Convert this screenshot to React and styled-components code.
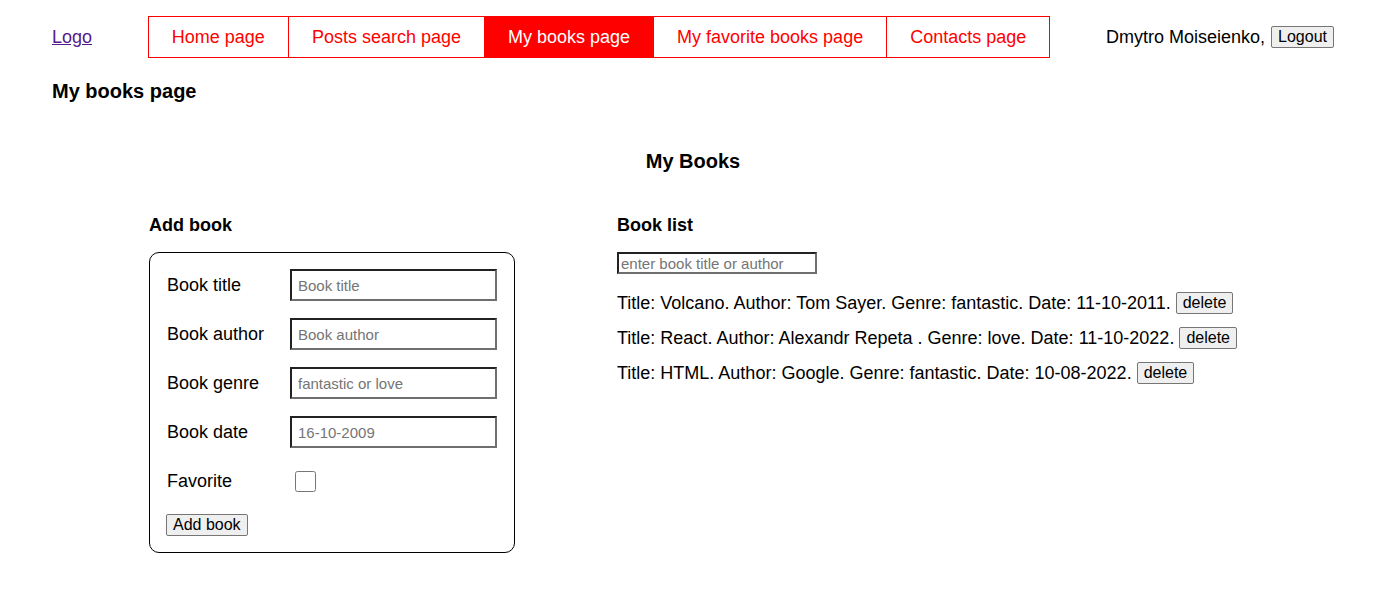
import styled, { createGlobalStyle } from 'styled-components';

const GlobalStyle = createGlobalStyle`
  body {
    margin: 0;
    font-family: "Liberation Sans", Arial, sans-serif;
    color: #000;
    background: #fff;
  }
`;

const navLinks = [
  { id: 1, label: 'Home page' },
  { id: 2, label: 'Posts search page' },
  { id: 3, label: 'My books page', active: true },
  { id: 4, label: 'My favorite books page' },
  { id: 5, label: 'Contacts page' },
];

const books = [
  { id: 1, title: 'Volcano', author: 'Tom Sayer', genre: 'fantastic', date: '11-10-2011' },
  { id: 2, title: 'React', author: 'Alexandr Repeta ', genre: 'love', date: '11-10-2022' },
  { id: 3, title: 'HTML', author: 'Google', genre: 'fantastic', date: '10-08-2022' },
];

const fields = [
  { id: 'title', label: 'Book title', placeholder: 'Book title' },
  { id: 'author', label: 'Book author', placeholder: 'Book author' },
  { id: 'genre', label: 'Book genre', placeholder: 'fantastic or love' },
  { id: 'date', label: 'Book date', placeholder: '16-10-2009' },
];

const Page = styled.div`
  padding: 16px 50px 40px 52px;
`;

const Header = styled.header`
  display: flex;
  align-items: center;
  justify-content: space-between;
  font-size: 18px;
`;

const Logo = styled.a`
  color: #551a8b;
  text-decoration: underline;
  font-size: 18px;
`;

const Nav = styled.nav`
  display: flex;
`;

const NavItem = styled.a`
  display: flex;
  align-items: center;
  height: 42px;
  box-sizing: border-box;
  padding: 0 23px;
  border: 1px solid #ff0000;
  margin-left: -1px;
  font-size: 18px;
  text-decoration: none;
  color: ${({ $active }) => ($active ? '#fff' : '#ff0000')};
  background: ${({ $active }) => ($active ? '#ff0000' : '#fff')};

  &:first-child {
    margin-left: 0;
  }
`;

const User = styled.div`
  display: flex;
  align-items: center;
  gap: 6px;
`;

const Button = styled.button`
  font-family: "Liberation Sans", Arial, sans-serif;
  font-size: 16px;
  line-height: 18px;
  padding: 1px 6px;
  border: 1px solid #767676;
  border-radius: 2px;
  background: #efefef;
  color: #000;
`;

const PageTitle = styled.h2`
  font-size: 20px;
  line-height: 23px;
  margin: 22px 0 0;
`;

const SectionTitle = styled.h2`
  font-size: 20px;
  line-height: 23px;
  text-align: center;
  margin: 47px 0 0;
`;

const Columns = styled.div`
  display: grid;
  grid-template-columns: 366px 1fr;
  column-gap: 102px;
  width: 1086px;
  margin: 42px auto 0;
  position: relative;
  left: -1px;
`;

const ColumnTitle = styled.h3`
  font-size: 18px;
  line-height: 21px;
  margin: 0 0 16px;
`;

const Form = styled.form`
  display: flex;
  flex-direction: column;
  align-items: flex-start;
  gap: 17px;
  border: 1px solid #000;
  border-radius: 10px;
  padding: 16px 17px 16px 16px;
`;

const Row = styled.label`
  display: flex;
  align-items: center;
  width: 100%;
  height: 32px;
  font-size: 18px;
`;

const LabelText = styled.span`
  width: 124px;
  flex-shrink: 0;
  padding-left: 1px;
  box-sizing: border-box;
`;

const TextInput = styled.input`
  width: 207px;
  min-width: 0;
  height: 32px;
  box-sizing: border-box;
  padding: 0 6px;
  font-family: "Liberation Sans", Arial, sans-serif;
  font-size: 15px;
  border: 2px solid;
  border-color: #222 #6f6f6f #6f6f6f #222;
  outline: none;

  &::placeholder {
    color: #757575;
  }
`;

const Checkbox = styled.input`
  width: 21px;
  height: 21px;
  margin: 0 0 0 5px;
`;

const SearchInput = styled.input`
  width: 200px;
  height: 22px;
  box-sizing: border-box;
  padding: 0 2px;
  font-family: "Liberation Sans", Arial, sans-serif;
  font-size: 15px;
  border: 2px solid;
  border-color: #222 #6f6f6f #6f6f6f #222;
  outline: none;

  &::placeholder {
    color: #757575;
  }
`;

const List = styled.ul`
  list-style: none;
  padding: 0;
  margin: 18px 0 0;
  display: flex;
  flex-direction: column;
  gap: 13px;
`;

const ListItem = styled.li`
  display: flex;
  align-items: center;
  gap: 5px;
  height: 22px;
  font-size: 18px;
  white-space: nowrap;
`;

export default function App() {
  return (
    <>
      <GlobalStyle />
      <Page>
        <Header>
          <Logo href="#">Logo</Logo>
          <Nav>
            {navLinks.map(({ id, label, active }) => (
              <NavItem key={id} href="#" $active={active}>
                {label}
              </NavItem>
            ))}
          </Nav>
          <User>
            <span>Dmytro Moiseienko,</span>
            <Button type="button">Logout</Button>
          </User>
        </Header>

        <PageTitle>My books page</PageTitle>
        <SectionTitle>My Books</SectionTitle>

        <Columns>
          <div>
            <ColumnTitle>Add book</ColumnTitle>
            <Form onSubmit={(e) => e.preventDefault()}>
              {fields.map(({ id, label, placeholder }) => (
                <Row key={id}>
                  <LabelText>{label}</LabelText>
                  <TextInput type="text" placeholder={placeholder} />
                </Row>
              ))}
              <Row>
                <LabelText>Favorite</LabelText>
                <Checkbox type="checkbox" />
              </Row>
              <Button type="submit">Add book</Button>
            </Form>
          </div>
          <div>
            <ColumnTitle>Book list</ColumnTitle>
            <SearchInput type="text" placeholder="enter book title or author" />
            <List>
              {books.map(({ id, title, author, genre, date }) => (
                <ListItem key={id}>
                  <span>
                    Title: {title}. Author: {author}. Genre: {genre}. Date: {date}.
                  </span>
                  <Button type="button">delete</Button>
                </ListItem>
              ))}
            </List>
          </div>
        </Columns>
      </Page>
    </>
  );
}
